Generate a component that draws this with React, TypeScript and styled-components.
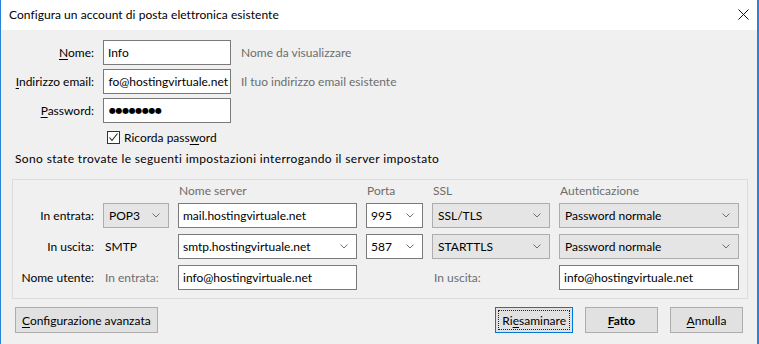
import React from 'react'
import styled, { createGlobalStyle } from 'styled-components'

const GlobalStyle = createGlobalStyle`
  html, body {
    margin: 0;
    padding: 0;
    background: #f0f0f0;
  }
  body {
    font-family: Lato, "Liberation Sans", sans-serif;
    font-size: 12px;
    color: #000;
  }
`

const Window = styled.div`
  width: 759px;
  height: 344px;
  box-sizing: border-box;
  border-left: 1px solid #2b83d9;
  border-right: 2px solid #2b83d9;
  background: #f0f0f0;
  display: flex;
  flex-direction: column;
  overflow: hidden;
`

const TitleBar = styled.div`
  height: 29px;
  flex-shrink: 0;
  background: #fff;
  display: flex;
  align-items: center;
  justify-content: space-between;
  padding: 0 8px 1px 8px;
`

const Title = styled.span`
  font-size: 12px;
  letter-spacing: 0.05px;
`

const CloseBtn = styled.div`
  width: 12px;
  height: 12px;
  display: flex;
  align-items: center;
  justify-content: center;
`

const Body = styled.div`
  padding: 10px 9px 0 11px;
  display: flex;
  flex-direction: column;
`

const TopForm = styled.div`
  display: grid;
  grid-template-columns: 82px 128px auto;
  grid-auto-rows: 25px;
  column-gap: 9px;
  row-gap: 4px;
  align-items: center;
`

const Label = styled.label`
  text-align: right;
  white-space: nowrap;
`

const Key = styled.span`
  text-decoration: underline;
  text-underline-offset: 2px;
`

const Hint = styled.span<{ $pad?: number }>`
  color: #6d6d6d;
  white-space: nowrap;
  padding-left: ${p => p.$pad ?? 1}px;
`

const Field = styled.div<{ $end?: boolean }>`
  height: 25px;
  box-sizing: border-box;
  border: 1px solid #7a7a7a;
  background: #fff;
  display: flex;
  align-items: center;
  justify-content: ${p => (p.$end ? 'flex-end' : 'flex-start')};
  padding: 0 ${p => (p.$end ? 2 : 4)}px 0 4px;
  white-space: nowrap;
  overflow: hidden;
`

const Dots = styled.span`
  font-family: "DejaVu Sans", sans-serif;
  font-size: 8px;
  letter-spacing: -0.4px;
  padding-left: 1px;
`

const CheckRow = styled.div`
  display: flex;
  align-items: center;
  gap: 4px;
  margin: 5px 0 0 95px;
  height: 18px;
`

const Box = styled.div`
  width: 13px;
  height: 13px;
  box-sizing: border-box;
  border: 1px solid #333;
  background: #fff;
  display: flex;
  align-items: center;
  justify-content: center;
`

const Info = styled.div`
  margin: 4px 0 0 3px;
  line-height: 17px;
  letter-spacing: 0.36px;
`

const Group = styled.div`
  margin-top: 12px;
  border: 1px solid #dcdcdc;
  padding: 4px 8px 8px 0;
  display: grid;
  grid-template-columns: 81px 66px 179px 57px 118px 180px;
  grid-template-rows: 13px repeat(3, 25px);
  column-gap: 9px;
  row-gap: 6px;
  align-items: center;
`

const ColHead = styled.span`
  color: #6d6d6d;
  padding-left: 1px;
  line-height: 13px;
`

const Combo = styled.div<{ $gray?: boolean }>`
  height: 25px;
  box-sizing: border-box;
  border: 1px solid ${p => (p.$gray ? '#adadad' : '#7a7a7a')};
  background: ${p => (p.$gray ? '#e5e5e5' : '#fff')};
  display: flex;
  align-items: center;
  justify-content: space-between;
  padding: 0 8px 0 ${p => (p.$gray ? 5 : 4)}px;
  white-space: nowrap;
`

const Plain = styled.span`
  padding-left: 2px;
`

const ButtonRow = styled.div`
  display: flex;
  align-items: center;
  margin-top: 8px;
  padding: 0 5px 0 3px;
  gap: 12px;
`

const Button = styled.div<{ $focus?: boolean; $bold?: boolean; $w: number }>`
  height: 26px;
  min-width: ${p => p.$w}px;
  box-sizing: border-box;
  background: #e1e1e1;
  border: 1px solid ${p => (p.$focus ? '#0078d7' : '#adadad')};
  font-weight: ${p => (p.$bold ? 700 : 400)};
  display: flex;
  align-items: center;
  justify-content: center;
  padding: 0 6px;
  position: relative;
  ${p =>
    p.$focus &&
    `
    &::after {
      content: '';
      position: absolute;
      inset: 2px;
      border: 1px dotted #222;
    }
  `}
`

const Spacer = styled.div`
  flex: 1;
`

const Chevron = () => (
  <svg width="8" height="5" viewBox="0 0 8 5">
    <polyline points="0.5,0.5 4,4 7.5,0.5" fill="none" stroke="#707070" strokeWidth="1" />
  </svg>
)

const App = () => {
  return (
    <>
      <GlobalStyle />
      <Window>
        <TitleBar>
          <Title>Configura un account di posta elettronica esistente</Title>
          <CloseBtn>
            <svg width="11" height="11" viewBox="0 0 11 11">
              <path d="M0.5 0.5 L10.5 10.5 M10.5 0.5 L0.5 10.5" stroke="#111" strokeWidth="1" />
            </svg>
          </CloseBtn>
        </TitleBar>
        <Body>
          <TopForm>
            <Label><Key>N</Key>ome:</Label>
            <Field>Info</Field>
            <Hint>Nome da visualizzare</Hint>

            <Label><Key>I</Key>ndirizzo email:</Label>
            <Field $end>fo@hostingvirtuale.net</Field>
            <Hint>Il tuo indirizzo email esistente</Hint>

            <Label><Key>P</Key>assword:</Label>
            <Field><Dots>●●●●●●●●</Dots></Field>
            <span />
          </TopForm>

          <CheckRow>
            <Box>
              <svg width="11" height="11" viewBox="0 0 11 11">
                <polyline points="1.5,5.5 4,8.5 9.5,1.5" fill="none" stroke="#222" strokeWidth="1.1" />
              </svg>
            </Box>
            <span>Ricorda pass<Key>w</Key>ord</span>
          </CheckRow>

          <Info>Sono state trovate le seguenti impostazioni interrogando il server impostato</Info>

          <Group>
            <span />
            <span />
            <ColHead>Nome server</ColHead>
            <ColHead>Porta</ColHead>
            <ColHead>SSL</ColHead>
            <ColHead>Autenticazione</ColHead>

            <Label>In entrata:</Label>
            <Combo $gray>POP3<Chevron /></Combo>
            <Field>mail.hostingvirtuale.net</Field>
            <Combo>995<Chevron /></Combo>
            <Combo $gray>SSL/TLS<Chevron /></Combo>
            <Combo $gray>Password normale<Chevron /></Combo>

            <Label>In uscita:</Label>
            <Plain>SMTP</Plain>
            <Combo>smtp.hostingvirtuale.net<Chevron /></Combo>
            <Combo>587<Chevron /></Combo>
            <Combo $gray>STARTTLS<Chevron /></Combo>
            <Combo $gray>Password normale<Chevron /></Combo>

            <Label>Nome utente:</Label>
            <Hint $pad={2}>In entrata:</Hint>
            <Field>info@hostingvirtuale.net</Field>
            <span />
            <Hint $pad={2}>In uscita:</Hint>
            <Field>info@hostingvirtuale.net</Field>
          </Group>

          <ButtonRow>
            <Button $w={142}><span><Key>C</Key>onfigurazione avanzata</span></Button>
            <Spacer />
            <Button $w={77} $focus><span>Ri<Key>e</Key>saminare</span></Button>
            <Button $w={73} $bold><span><Key>F</Key>atto</span></Button>
            <Button $w={73}><span><Key>A</Key>nnulla</span></Button>
          </ButtonRow>
        </Body>
      </Window>
    </>
  )
}

export default App
